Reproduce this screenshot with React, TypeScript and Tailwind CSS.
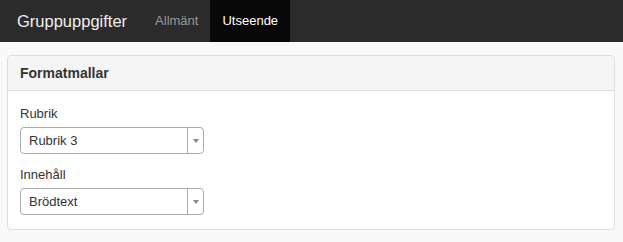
import React from "react";

function Select({ value }: { value: string }) {
  return (
    <div className="flex h-[27px] w-[184px] items-stretch rounded-[4px] border border-[#aaaaaa] bg-white">
      <div className="flex flex-1 items-center pl-[8px] text-[13px] text-[#333333]">{value}</div>
      <div className="flex w-[16px] items-center justify-center border-l border-[#aaaaaa]">
        <svg width="6" height="4" viewBox="0 0 6 4">
          <path d="M0 0 L6 0 L3 4 Z" fill="#888888" />
        </svg>
      </div>
    </div>
  );
}

export default function App() {
  return (
    <div
      className="min-h-[242px] bg-[#f9f9f9]"
      style={{ fontFamily: '"Liberation Sans", Arial, sans-serif' }}
    >
      <nav className="flex h-[42px] items-stretch bg-[#2b2b2b]">
        <div className="flex items-center pl-[17px] pr-[16px] text-[16.5px] text-[#eeeeee]">Gruppuppgifter</div>
        <div className="flex items-center px-[12px] text-[13px] text-[#999999]">Allmänt</div>
        <div className="flex items-center bg-[#080808] px-[12px] text-[13px] text-white">Utseende</div>
      </nav>
      <div className="pl-[7px] pr-[8px] pt-[13px] pb-[11px]">
        <div className="rounded-[4px] border border-[#dddddd] bg-white">
          <div className="flex h-[35px] items-center rounded-t-[4px] border-b border-[#dddddd] bg-[#f5f5f5] px-[12px] text-[14px] font-bold text-[#333333]">
            Formatmallar
          </div>
          <div className="px-[12px] pt-[14px] pb-[14px]">
            <div className="mb-[4px] text-[13px] leading-[18px] text-[#333333]">Rubrik</div>
            <Select value="Rubrik 3" />
            <div className="mt-[12px] mb-[4px] text-[13px] leading-[18px] text-[#333333]">Innehåll</div>
            <Select value="Brödtext" />
          </div>
        </div>
      </div>
    </div>
  );
}
